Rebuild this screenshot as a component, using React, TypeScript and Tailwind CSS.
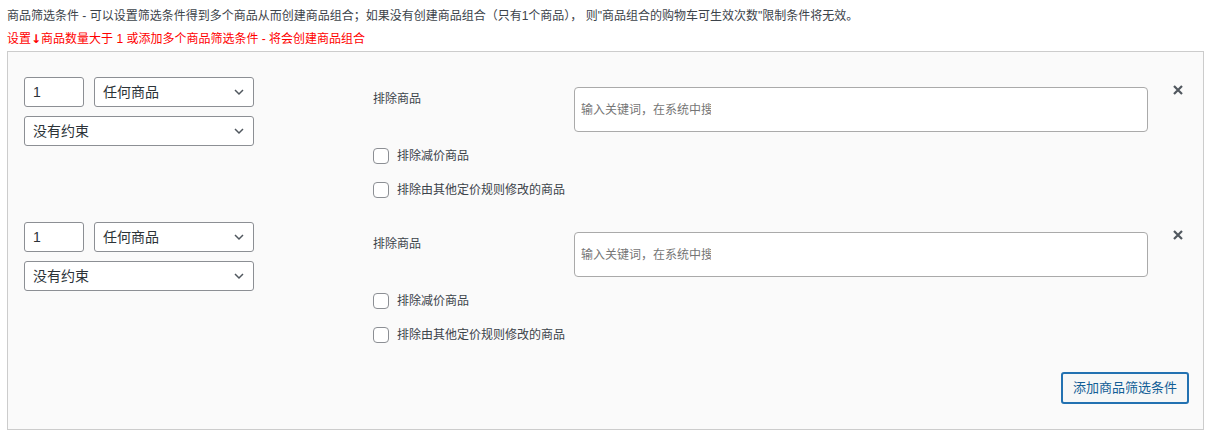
import React from 'react';

const font = { fontFamily: '"Liberation Sans", "Noto Sans CJK SC", sans-serif' };

function Chevron() {
  return (
    <svg width="12" height="12" viewBox="0 0 12 12" className="text-[#50575e]">
      <path d="M2 4l4 4 4-4" fill="none" stroke="currentColor" strokeWidth="1.5" />
    </svg>
  );
}

function FakeSelect({ label, width }: { label: string; width: string }) {
  return (
    <div
      className={`flex h-[30px] items-center justify-between rounded-[3px] border border-[#8c8f94] bg-white pl-2 pr-[8px] text-[14px] text-[#2c3338] ${width}`}
    >
      <span>{label}</span>
      <Chevron />
    </div>
  );
}

function Checkbox({ label }: { label: string }) {
  return (
    <label className="flex h-4 items-center gap-2 text-[12px] text-[#3c434a]">
      <span className="h-4 w-4 rounded-[4px] border border-[#8c8f94] bg-white" />
      {label}
    </label>
  );
}

function FilterRow() {
  return (
    <div className="flex">
      <div className="flex w-[230px] flex-col gap-[9px]">
        <div className="flex gap-[10px]">
          <div className="flex h-[30px] w-[60px] items-center rounded-[3px] border border-[#8c8f94] bg-white px-2 text-[14px] text-[#2c3338]">
            1
          </div>
          <FakeSelect label="任何商品" width="w-[160px]" />
        </div>
        <FakeSelect label="没有约束" width="w-[230px]" />
      </div>

      <div className="ml-[119px] mt-[10px] flex w-[775px] flex-col">
        <div className="flex">
          <div className="w-[201px] pt-[3px] text-[12px] text-[#3c434a]">排除商品</div>
          <div className="flex h-[45px] flex-1 items-center rounded-[4px] border border-[#aaaaaa] bg-white px-[6px]">
            <span className="w-[130px] overflow-hidden whitespace-nowrap text-[12px] text-[#757575]">
              输入关键词，在系统中搜索商品
            </span>
          </div>
        </div>
        <div className="mt-[16px] flex flex-col gap-[18px]">
          <Checkbox label="排除减价商品" />
          <Checkbox label="排除由其他定价规则修改的商品" />
        </div>
      </div>

      <div className="ml-[24px] pt-[7px]">
        <svg width="12" height="12" viewBox="0 0 12 12">
          <path d="M2 2l8 8M10 2l-8 8" stroke="#50575e" strokeWidth="2.2" />
        </svg>
      </div>
    </div>
  );
}

export default function App() {
  return (
    <div className="h-[435px] w-[1212px] bg-white px-[7px] pt-[8px]" style={font}>
      <p className="text-[12px] leading-[16px] text-[#3c434a]">
        商品筛选条件 - 可以设置筛选条件得到多个商品从而创建商品组合；如果没有创建商品组合（只有1个商品）， 则"商品组合的购物车可生效次数"限制条件将无效。
      </p>
      <p className="mt-[7px] text-[12px] leading-[16px] text-[#ff0000]">
        设置<span className="font-['DejaVu_Sans'] text-[12px] font-bold">↓</span>商品数量大于 1 或添加多个商品筛选条件 - 将会创建商品组合
      </p>

      <div className="mt-[4px] flex w-[1197px] flex-col border border-[#cccccc] bg-[#fafafa] pb-[25px] pl-[16px] pt-[25px]">
        <div className="flex flex-col gap-[24px]">
          <FilterRow />
          <FilterRow />
        </div>
        <div className="mt-[29px] flex justify-end pr-[14px]">
          <button className="h-[32px] rounded-[3px] border-2 border-[#2271b1] bg-[#f6f7f7] px-[10px] text-[13px] text-[#135e96]">
            添加商品筛选条件
          </button>
        </div>
      </div>
    </div>
  );
}
